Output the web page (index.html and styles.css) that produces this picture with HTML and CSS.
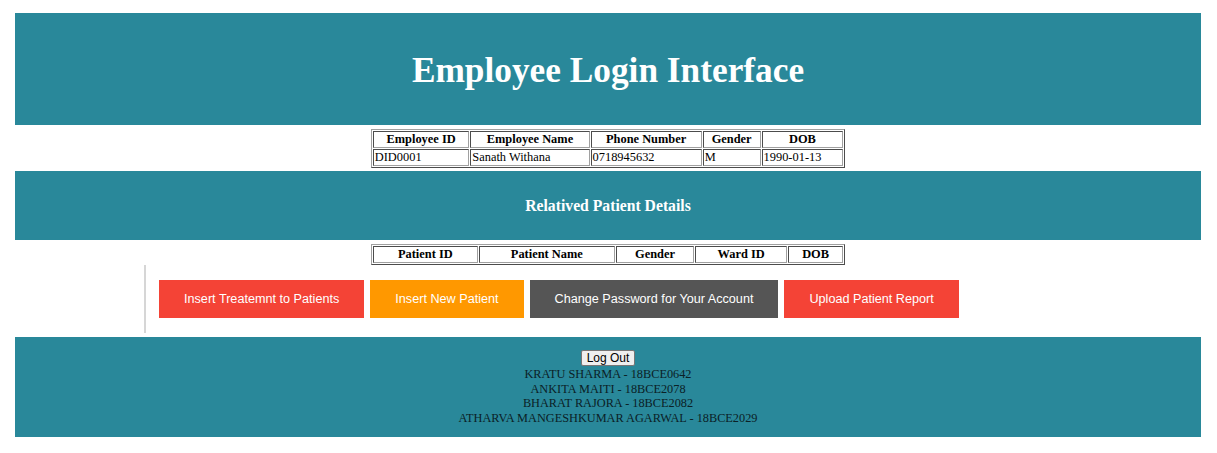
FILE: index.html
```html
<!DOCTYPE html>
<html>
<head>
<meta charset="utf-8">
<title>Employee Login Interface</title>
<link rel="stylesheet" href="styles.css">
</head>
<body>
<div class="page">
  <header class="band band-title">
    <h1>Employee Login Interface</h1>
  </header>

  <table class="grid">
    <tr>
      <th>Employee ID</th>
      <th>Employee Name</th>
      <th>Phone Number</th>
      <th>Gender</th>
      <th>DOB</th>
    </tr>
    <tr>
      <td>DID0001</td>
      <td>Sanath Withana</td>
      <td>0718945632</td>
      <td>M</td>
      <td>1990-01-13</td>
    </tr>
  </table>

  <div class="band band-sub">
    <h2>Relatived Patient Details</h2>
  </div>

  <table class="grid grid-patients">
    <tr>
      <th>Patient ID</th>
      <th>Patient Name</th>
      <th>Gender</th>
      <th>Ward ID</th>
      <th>DOB</th>
    </tr>
  </table>

  <nav class="actions">
    <a class="btn btn-red" href="#">Insert Treatemnt to Patients</a>
    <a class="btn btn-orange" href="#">Insert New Patient</a>
    <a class="btn btn-dark" href="#">Change Password for Your Account</a>
    <a class="btn btn-red" href="#">Upload Patient Report</a>
  </nav>

  <footer class="band band-footer">
    <button class="logout" type="button">Log Out</button>
    <p>KRATU SHARMA - 18BCE0642</p>
    <p>ANKITA MAITI - 18BCE2078</p>
    <p>BHARAT RAJORA - 18BCE2082</p>
    <p>ATHARVA MANGESHKUMAR AGARWAL - 18BCE2029</p>
  </footer>
</div>
</body>
</html>
```

FILE: styles.css
```css
html, body {
  margin: 0;
  padding: 0;
  background: #ffffff;
}

body {
  font-family: "Liberation Serif", "Times New Roman", serif;
  color: #000;
}

.page {
  padding: 13px 16px 16px 15px;
}

.band {
  background: #29889a;
  color: #ffffff;
  text-align: center;
}

.band-title {
  box-sizing: border-box;
  height: 112px;
  padding-top: 3px;
  display: flex;
  align-items: center;
  justify-content: center;
}

.band-title h1 {
  margin: 0;
  font-size: 35.3px;
  font-weight: bold;
  line-height: 40px;
}

.grid {
  width: 40%;
  margin: 4px auto 3px;
  border: 1px outset #a0a0a0;
  border-spacing: 1px;
  font-size: 12.4px;
  line-height: 15px;
}

.grid th,
.grid td {
  border: 1px inset #a0a0a0;
  padding: 0 1px;
  white-space: nowrap;
}

.grid th {
  text-align: center;
  font-weight: bold;
}

.grid td {
  text-align: left;
}

.band-sub {
  height: 69px;
  display: flex;
  align-items: center;
  justify-content: center;
}

.band-sub h2 {
  margin: 0;
  font-size: 15.7px;
  font-weight: bold;
  line-height: 18px;
}

.grid-patients {
  margin: 4px auto 0;
}

.actions {
  margin-left: 129px;
  border-left: 2px solid #d6d6d6;
  padding: 15px 0 15px 13px;
  display: flex;
  gap: 6px;
}

.btn {
  display: block;
  padding: 12px 25px;
  font-family: "Liberation Sans", Arial, sans-serif;
  font-size: 12.65px;
  line-height: 14px;
  color: #ffffff;
  text-decoration: none;
}

.btn-red {
  background: #f44336;
}

.btn-orange {
  background: #ff9800;
}

.btn-dark {
  background: #555555;
}

.band-footer {
  margin-top: 4px;
  padding: 13px 0 12px;
  color: #0b2126;
  font-size: 12.3px;
  line-height: 14.5px;
}

.band-footer p {
  margin: 0;
}

.logout {
  display: block;
  margin: 0 auto 1px;
  font-family: "Liberation Sans", Arial, sans-serif;
  font-size: 12px;
  line-height: 14px;
  padding: 0 5px;
  background: #efefef;
  color: #000;
  border: 1px solid #767676;
  border-radius: 2px;
}
```
